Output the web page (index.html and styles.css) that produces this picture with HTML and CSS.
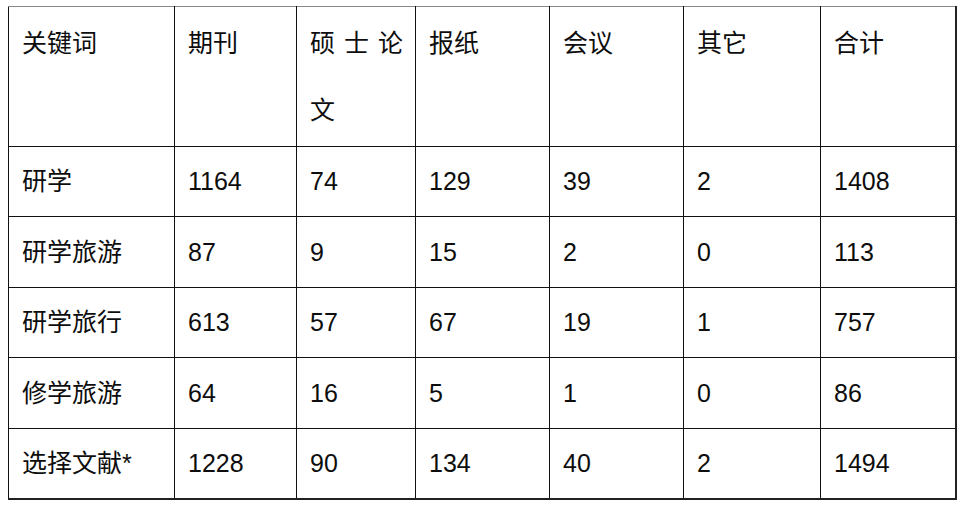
FILE: index.html
```html
<!DOCTYPE html>
<html lang="zh-CN">
<head>
<meta charset="utf-8">
<title>文献统计</title>
<link rel="stylesheet" href="styles.css">
</head>
<body>
<table class="stats">
  <colgroup>
    <col class="c1"><col class="c2"><col class="c3"><col class="c4"><col class="c5"><col class="c6"><col class="c7">
  </colgroup>
  <tr class="head">
    <td>关键词</td><td>期刊</td><td class="just">硕 士 论 文</td><td>报纸</td><td>会议</td><td>其它</td><td>合计</td>
  </tr>
  <tr class="r70">
    <td>研学</td><td>1164</td><td>74</td><td>129</td><td>39</td><td>2</td><td>1408</td>
  </tr>
  <tr class="r71">
    <td>研学旅游</td><td>87</td><td>9</td><td>15</td><td>2</td><td>0</td><td>113</td>
  </tr>
  <tr class="r70">
    <td>研学旅行</td><td>613</td><td>57</td><td>67</td><td>19</td><td>1</td><td>757</td>
  </tr>
  <tr class="r71">
    <td>修学旅游</td><td>64</td><td>16</td><td>5</td><td>1</td><td>0</td><td>86</td>
  </tr>
  <tr class="r70 last">
    <td>选择文献*</td><td>1228</td><td>90</td><td>134</td><td>40</td><td>2</td><td>1494</td>
  </tr>
</table>
</body>
</html>
```
FILE: styles.css
```css
html, body {
  margin: 0;
  padding: 0;
  background: #ffffff;
}

body {
  font-family: "Liberation Sans", "Noto Sans CJK SC", sans-serif;
  color: #0d0d0d;
}

.stats {
  margin: 6px 0 0 8px;
  border-collapse: collapse;
  table-layout: fixed;
  width: 947px;
  font-size: 25px;
  line-height: 67px;
}

.c1 { width: 166px; }
.c2 { width: 122px; }
.c3 { width: 119px; }
.c4 { width: 134px; }
.c5 { width: 134px; }
.c6 { width: 137px; }
.c7 { width: 135px; }

.stats td {
  border: 1px solid #111111;
  padding: 0 12px 0 13px;
  vertical-align: middle;
  text-align: left;
  white-space: normal;
}

.stats tr.head td {
  border-top-color: #8a8a8a;
  vertical-align: top;
  padding-top: 3px;
}

.stats td:last-child {
  border-right: 2px solid #222222;
}

.stats tr.last td {
  border-bottom: 2px solid #222222;
}

.head { height: 140px; }
.r70 { height: 70px; }
.r71 { height: 71px; }

.stats td.just {
  text-align: justify;
}
```
